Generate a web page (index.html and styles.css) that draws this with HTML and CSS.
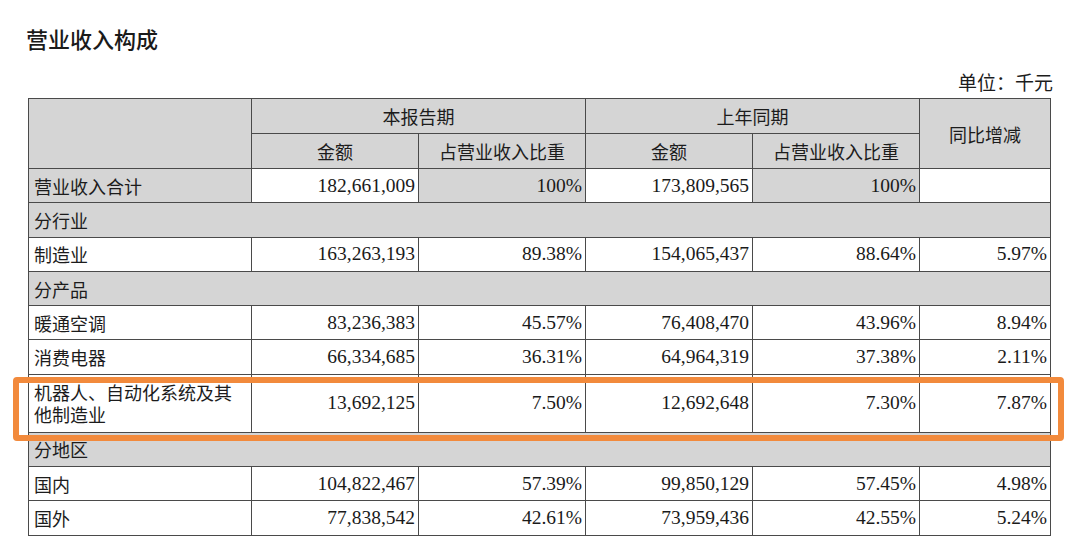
FILE: index.html
```html
<!DOCTYPE html>
<html lang="zh-CN">
<head>
<meta charset="utf-8">
<title>营业收入构成</title>
<link rel="stylesheet" href="styles.css">
</head>
<body>
<div class="page">
  <h1 class="title">营业收入构成</h1>
  <div class="unit">单位：千元</div>
  <div class="table-wrap">
    <table class="rev">
      <colgroup>
        <col class="c-label">
        <col class="c-num">
        <col class="c-num">
        <col class="c-num">
        <col class="c-num">
        <col class="c-yoy">
      </colgroup>
      <thead>
        <tr class="h1row">
          <th rowspan="2" class="gray"></th>
          <th colspan="2" class="gray">本报告期</th>
          <th colspan="2" class="gray">上年同期</th>
          <th rowspan="2" class="gray">同比增减</th>
        </tr>
        <tr class="h2row">
          <th class="gray">金额</th>
          <th class="gray">占营业收入比重</th>
          <th class="gray">金额</th>
          <th class="gray">占营业收入比重</th>
        </tr>
      </thead>
      <tbody>
        <tr>
          <td class="label gray">营业收入合计</td>
          <td class="num">182,661,009</td>
          <td class="num gray">100%</td>
          <td class="num">173,809,565</td>
          <td class="num gray">100%</td>
          <td class="num"></td>
        </tr>
        <tr class="section">
          <td class="label gray" colspan="6">分行业</td>
        </tr>
        <tr>
          <td class="label">制造业</td>
          <td class="num">163,263,193</td>
          <td class="num">89.38%</td>
          <td class="num">154,065,437</td>
          <td class="num">88.64%</td>
          <td class="num">5.97%</td>
        </tr>
        <tr class="section">
          <td class="label gray" colspan="6">分产品</td>
        </tr>
        <tr>
          <td class="label">暖通空调</td>
          <td class="num">83,236,383</td>
          <td class="num">45.57%</td>
          <td class="num">76,408,470</td>
          <td class="num">43.96%</td>
          <td class="num">8.94%</td>
        </tr>
        <tr>
          <td class="label">消费电器</td>
          <td class="num">66,334,685</td>
          <td class="num">36.31%</td>
          <td class="num">64,964,319</td>
          <td class="num">37.38%</td>
          <td class="num">2.11%</td>
        </tr>
        <tr class="tall">
          <td class="label wrap">机器人、自动化系统及其他制造业</td>
          <td class="num">13,692,125</td>
          <td class="num">7.50%</td>
          <td class="num">12,692,648</td>
          <td class="num">7.30%</td>
          <td class="num">7.87%</td>
        </tr>
        <tr class="section">
          <td class="label gray" colspan="6">分地区</td>
        </tr>
        <tr>
          <td class="label">国内</td>
          <td class="num">104,822,467</td>
          <td class="num">57.39%</td>
          <td class="num">99,850,129</td>
          <td class="num">57.45%</td>
          <td class="num">4.98%</td>
        </tr>
        <tr>
          <td class="label">国外</td>
          <td class="num">77,838,542</td>
          <td class="num">42.61%</td>
          <td class="num">73,959,436</td>
          <td class="num">42.55%</td>
          <td class="num">5.24%</td>
        </tr>
      </tbody>
    </table>
    <div class="highlight"></div>
  </div>
</div>
</body>
</html>
```

FILE: styles.css
```css
html, body {
  margin: 0;
  padding: 0;
  background: #ffffff;
}

body {
  width: 1080px;
  height: 555px;
  overflow: hidden;
  color: #1c1c1c;
  font-family: "Liberation Serif", "Noto Sans CJK SC", serif;
}

.page {
  display: flex;
  flex-direction: column;
  padding: 27px 30px 0 28px;
}

.title {
  margin: 0 0 0 -2px;
  font-family: "Noto Sans CJK SC", sans-serif;
  font-size: 22px;
  line-height: 22px;
  font-weight: 500;
  color: #1a1a1a;
}

.unit {
  margin-top: 23px;
  margin-right: -3px;
  align-self: flex-end;
  font-family: "Noto Sans CJK SC", sans-serif;
  font-size: 19px;
  line-height: 19px;
  font-weight: 400;
  color: #1c1c1c;
}

.table-wrap {
  position: relative;
  margin-top: 7px;
  width: 1022px;
}

.rev {
  width: 1022px;
  border-collapse: collapse;
  table-layout: fixed;
}

.c-label { width: 223px; }
.c-num { width: 167px; }
.c-yoy { width: 131px; }

.rev th,
.rev td {
  border: 1px solid #4a4a4a;
  padding: 0;
  background: #ffffff;
}

.rev .gray {
  background: #d5d5d5;
}

.rev th {
  font-family: "Noto Sans CJK SC", sans-serif;
  font-size: 18px;
  font-weight: 400;
  text-align: center;
  vertical-align: middle;
  color: #1c1c1c;
}

.h1row th,
.h2row th {
  height: 34px;
}

.rev td {
  height: 33.3px;
  vertical-align: middle;
}

.rev .label {
  font-family: "Noto Sans CJK SC", sans-serif;
  font-size: 18px;
  line-height: 22px;
  padding-left: 5px;
  text-align: left;
  color: #1c1c1c;
}

.rev .num {
  font-family: "Liberation Serif", serif;
  font-size: 19.5px;
  text-align: right;
  padding-right: 3px;
  color: #1a1a1a;
}

.rev .tall td {
  height: 57px;
}

.rev .wrap {
  padding-right: 14px;
  word-break: break-all;
}

.highlight {
  position: absolute;
  left: -15px;
  top: 279px;
  width: 1051px;
  height: 64px;
  box-sizing: border-box;
  border: 6px solid #f28a3c;
  border-radius: 4px;
  pointer-events: none;
}
```
